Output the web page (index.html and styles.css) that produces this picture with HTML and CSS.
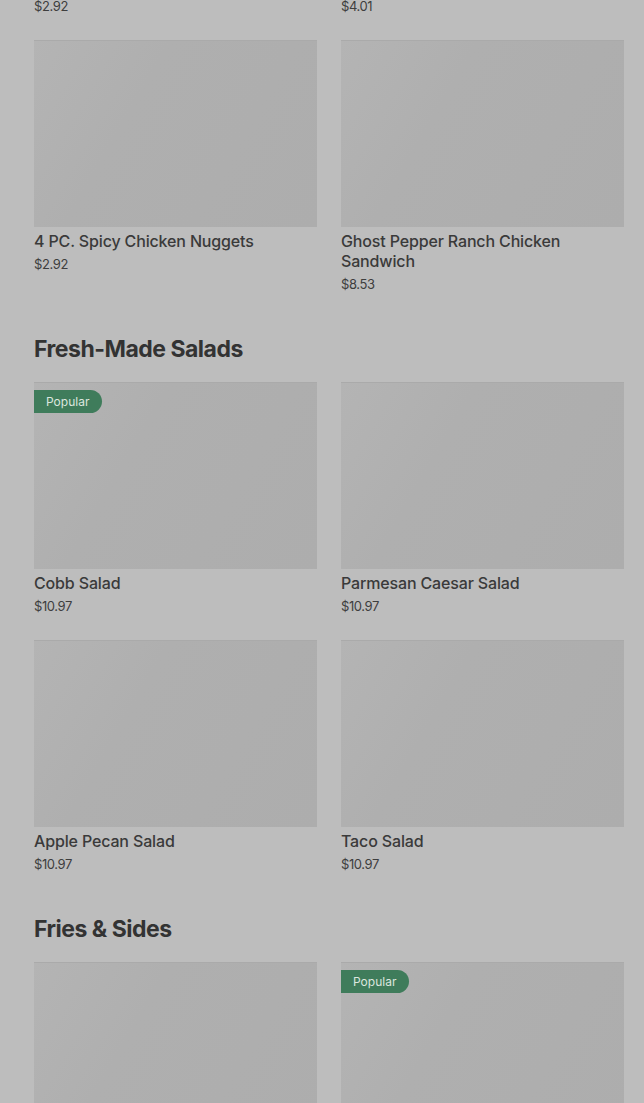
FILE: index.html
```html
<!DOCTYPE html>
<html>
<head>
<meta charset="utf-8">
<link rel="stylesheet" href="styles.css">
</head>
<body>
<div class="page">
  <div class="grid tails">
    <div class="price tail">$2.92</div>
    <div class="price tail">$4.01</div>
  </div>
  <div class="grid">
    <div class="card">
      <div class="img"></div>
      <div class="name">4 PC. Spicy Chicken Nuggets</div>
      <div class="price">$2.92</div>
    </div>
    <div class="card">
      <div class="img"></div>
      <div class="name">Ghost Pepper Ranch Chicken Sandwich</div>
      <div class="price">$8.53</div>
    </div>
  </div>

  <h2 class="section">Fresh-Made Salads</h2>
  <div class="grid">
    <div class="card">
      <div class="img"><span class="badge">Popular</span></div>
      <div class="name">Cobb Salad</div>
      <div class="price">$10.97</div>
    </div>
    <div class="card">
      <div class="img"></div>
      <div class="name">Parmesan Caesar Salad</div>
      <div class="price">$10.97</div>
    </div>
    <div class="card">
      <div class="img"></div>
      <div class="name">Apple Pecan Salad</div>
      <div class="price">$10.97</div>
    </div>
    <div class="card">
      <div class="img"></div>
      <div class="name">Taco Salad</div>
      <div class="price">$10.97</div>
    </div>
  </div>

  <h2 class="section">Fries &amp; Sides</h2>
  <div class="grid">
    <div class="card">
      <div class="img"></div>
    </div>
    <div class="card">
      <div class="img"><span class="badge">Popular</span></div>
    </div>
  </div>
</div>
</body>
</html>
```

FILE: styles.css
```css
html, body {
  margin: 0;
  padding: 0;
  background: #bdbdbd;
  height: 1103px;
  overflow: hidden;
}
body {
  font-family: Inter, "Noto Sans", sans-serif;
  color: #3a3a3a;
}
.page {
  padding: 0 20px 0 34px;
}
.grid {
  display: grid;
  grid-template-columns: 1fr 1fr;
  column-gap: 24px;
  row-gap: 24px;
}
.tails {
  margin-bottom: 28px;
}
.card {
  display: flex;
  flex-direction: column;
}
.img {
  position: relative;
  height: 187px;
  background: linear-gradient(120deg, #b4b4b4 0%, #afafaf 35%, #adadad 100%);
  border-top: 1px solid #aaaaaa;
  box-sizing: border-box;
}
.name {
  margin-top: 4px;
  font-size: 16px;
  line-height: 20px;
  font-weight: 500;
  color: #3a3a3a;
  letter-spacing: -0.15px;
}
.price {
  margin-top: 3px;
  font-size: 13px;
  line-height: 20px;
  font-weight: 400;
  color: #3e3e3e;
  letter-spacing: -0.4px;
}
.tails .price {
  margin-top: 0;
  line-height: 12px;
}
.section {
  margin: 39px 0 17px;
  font-size: 23px;
  line-height: 32px;
  font-weight: 700;
  letter-spacing: -0.5px;
  color: #333333;
}
.badge {
  position: absolute;
  top: 7px;
  left: 0;
  height: 23px;
  line-height: 23px;
  padding: 0 13px 0 12px;
  background: #3f7c5b;
  color: #dce6df;
  font-size: 12px;
  border-radius: 0 12px 12px 0;
}
```
